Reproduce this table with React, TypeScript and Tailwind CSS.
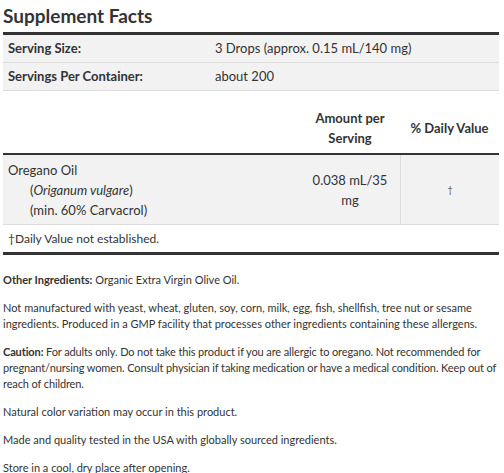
import React from 'react';

const font = { fontFamily: 'Lato, "Open Sans", sans-serif' };

function App() {
  return (
    <div className="w-[504px] h-[473px] overflow-hidden bg-white text-[#333] pl-[3px]" style={font}>
      <h2 className="text-[19px] font-bold leading-[28px] pt-[2px] pb-[2px] text-[#333]">Supplement Facts</h2>

      {/* serving info */}
      <div className="w-[496px] border-t-[3px] border-[#333] text-[13px]">
        <div className="flex items-center h-[28px] bg-[#f2f2f2] border-b border-[#dcdcdc]">
          <div className="w-[212px] pl-[5px] font-bold">Serving Size:</div>
          <div>3 Drops (approx. 0.15 mL/140 mg)</div>
        </div>
        <div className="flex items-center h-[28px] bg-[#f2f2f2] border-b border-[#dcdcdc]">
          <div className="w-[212px] pl-[5px] font-bold">Servings Per Container:</div>
          <div>about 200</div>
        </div>
      </div>

      {/* nutrients */}
      <div className="w-[496px] mt-[12px] text-[13px]">
        <div className="flex items-center h-[52px] font-bold leading-[20px] border-b-[2px] border-[#333]">
          <div className="flex-1"></div>
          <div className="w-[100px] text-center">Amount per<br />Serving</div>
          <div className="w-[99px] text-center">% Daily Value</div>
        </div>
        <div className="flex h-[70px] bg-[#f2f2f2] border-b border-[#dcdcdc] leading-[20px]">
          <div className="flex-1 pl-[5px] py-[5px]">
            <div>Oregano Oil</div>
            <div className="pl-[22px]">(<i>Origanum vulgare</i>)</div>
            <div className="pl-[22px]">(min. 60% Carvacrol)</div>
          </div>
          <div className="w-[100px] flex items-center justify-center text-center px-[12px]">0.038 mL/35 mg</div>
          <div className="w-[99px] flex items-center justify-center border-l border-[#dcdcdc] text-[9px] text-[#555]">†</div>
        </div>
        <div className="h-[30px] flex items-center pl-[5px] text-[12px] border-b-[3px] border-[#333]">
          †Daily Value not established.
        </div>
      </div>

      {/* notes */}
      <div className="w-[501px] mt-[17px] text-[11px] leading-[16px] flex flex-col gap-[12px]">
        <p><b>Other Ingredients:</b> Organic Extra Virgin Olive Oil.</p>
        <p>Not manufactured with yeast, wheat, gluten, soy, corn, milk, egg, fish, shellfish, tree nut or sesame ingredients. Produced in a GMP facility that processes other ingredients containing these allergens.</p>
        <p className="tracking-[-0.12px]"><b>Caution:</b> For adults only. Do not take this product if you are allergic to oregano. Not recommended for pregnant/nursing women. Consult physician if taking medication or have a medical condition. Keep out of reach of children.</p>
        <p>Natural color variation may occur in this product.</p>
        <p>Made and quality tested in the USA with globally sourced ingredients.</p>
        <p>Store in a cool, dry place after opening.</p>
      </div>
    </div>
  );
}

export default App;
